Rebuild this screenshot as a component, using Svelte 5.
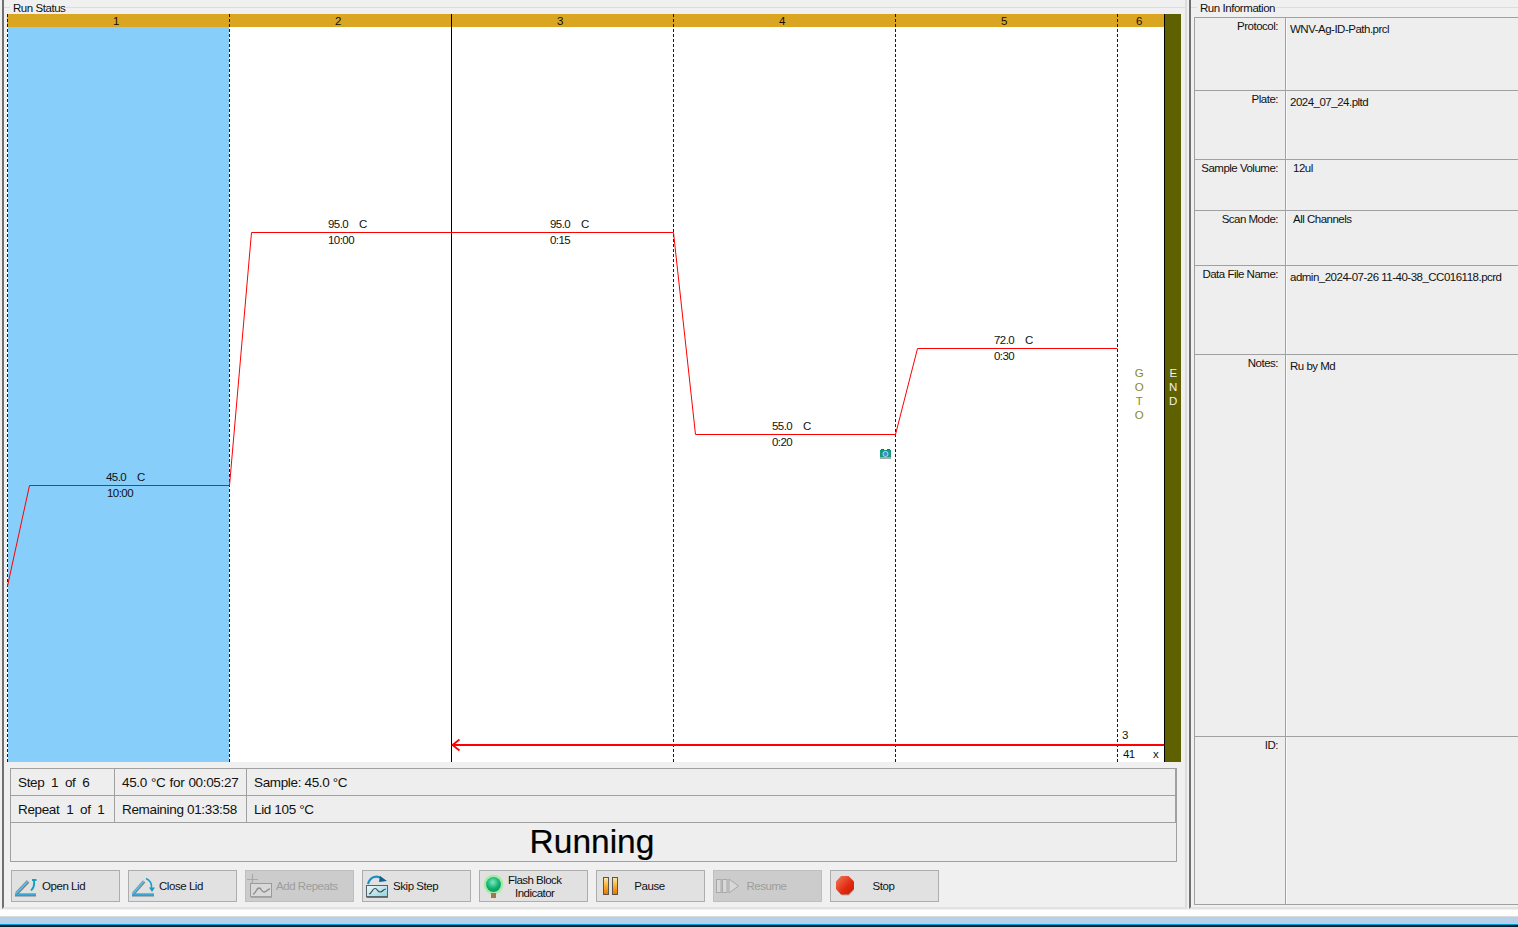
<script>
  const stepLines = [229.5, 673.5, 895.5, 1117.5];
  const stepNumbers = [
    { n: '1', x: 116 }, { n: '2', x: 338 }, { n: '3', x: 560 },
    { n: '4', x: 782 }, { n: '5', x: 1004 }, { n: '6', x: 1139 }
  ];
  const temps = [
    { t: '45.0', c: 137, tx: 106, y: 481, time: '10:00', timex: 107 },
    { t: '95.0', c: 359, tx: 328, y: 228, time: '10:00', timex: 328 },
    { t: '95.0', c: 581, tx: 550, y: 228, time: '0:15', timex: 550 },
    { t: '55.0', c: 803, tx: 772, y: 430, time: '0:20', timex: 772 },
    { t: '72.0', c: 1025, tx: 994, y: 344, time: '0:30', timex: 994 }
  ];
  const info = [
    { label: 'Protocol:', value: 'WNV-Ag-ID-Path.prcl', cls: 'h73' },
    { label: 'Plate:', value: '2024_07_24.pltd', cls: 'h69' },
    { label: 'Sample Volume:', value: '12ul', cls: 'h51 ind' },
    { label: 'Scan Mode:', value: 'All Channels', cls: 'h55 ind' },
    { label: 'Data File Name:', value: 'admin_2024-07-26 11-40-38_CC016118.pcrd', cls: 'h89' },
    { label: 'Notes:', value: 'Ru by Md', cls: 'h382' },
    { label: 'ID:', value: '', cls: 'h169' }
  ];
</script>

<div class="app">
  <div class="panes">
    <section class="left">
      <div class="legend"><span class="rule short"></span><span class="legend-text">Run Status</span><span class="rule"></span></div>
      <div class="chart">
        <svg viewBox="7 14 1174 748" width="1174" height="748">
          <rect x="7" y="14" width="1174" height="748" fill="#fff" />
          <rect x="8" y="27" width="221" height="735" fill="#87cefa" />
          <rect x="7" y="14" width="1157" height="13" fill="#daa520" />
          <rect x="1164" y="14" width="17" height="748" fill="#5f6000" />
          <line x1="1164.5" y1="14" x2="1164.5" y2="762" stroke="#000" />
          <line x1="7.5" y1="14" x2="7.5" y2="762" stroke="#0000e0" stroke-dasharray="3 2" />
          {#each stepLines as x}
            <line x1={x} y1="14" x2={x} y2="762" stroke="#0000e0" stroke-dasharray="3 2" />
          {/each}
          <line x1="451.5" y1="14" x2="451.5" y2="762" stroke="#000" />
          {#each stepNumbers as s}
            <text class="t" x={s.x} y="25" text-anchor="middle">{s.n}</text>
          {/each}
          <polyline class="curve" points="7.5,586 29.5,485.5 229.5,485.5 251.5,232.5 673.5,232.5 695.5,434.5 895.5,434.5 917.5,348.5 1117.5,348.5" />
          {#each temps as d}
            <text class="t" x={d.tx} y={d.y}>{d.t}</text>
            <text class="t" x={d.c} y={d.y}>C</text>
            <text class="t" x={d.timex} y={d.y + 16}>{d.time}</text>
          {/each}
          <line x1="453" y1="745" x2="1164" y2="745" stroke="#f00" stroke-width="2" />
          <polyline points="459.5,739.5 452.5,745 459.5,750.5" fill="none" stroke="#f00" stroke-width="1.8" />
          <text class="t" x="1122" y="739">3</text>
          <text class="t" x="1123" y="758">41</text>
          <text class="t" x="1153" y="758">x</text>
          <text class="t goto" x="1139" y="377" text-anchor="middle">G</text>
          <text class="t goto" x="1139" y="391" text-anchor="middle">O</text>
          <text class="t goto" x="1139" y="405" text-anchor="middle">T</text>
          <text class="t goto" x="1139" y="419" text-anchor="middle">O</text>
          <text class="t end" x="1173" y="377" text-anchor="middle">E</text>
          <text class="t end" x="1173" y="391" text-anchor="middle">N</text>
          <text class="t end" x="1173" y="405" text-anchor="middle">D</text>
          <g>
            <rect x="880" y="450" width="11" height="7" fill="#169a7c" />
            <rect x="880" y="457" width="11" height="2" fill="#9ab0a8" />
            <rect x="881" y="449" width="3" height="1" fill="#555" />
            <rect x="887" y="449" width="3" height="1" fill="#555" />
            <circle cx="885.5" cy="454" r="2.6" fill="#3f8fe0" stroke="#cfe6ff" stroke-width=".8" />
          </g>
        </svg>
      </div>

      <div class="status">
        <div class="cell c1">Step 1 of 6</div>
        <div class="cell c2 wide">45.0 °C for 00:05:27</div>
        <div class="cell c3">Sample: 45.0 °C</div>
        <div class="cell c1">Repeat 1 of 1</div>
        <div class="cell c2">Remaining 01:33:58</div>
        <div class="cell c3">Lid 105 °C</div>
        <div class="running">Running</div>
      </div>

      <div class="buttons">
        <div class="btn">
          <svg class="ico" viewBox="0 0 26 22" width="26" height="22">
            <path d="M2.5 18.5 L14 6.5" stroke="#6f8088" stroke-width="3.4" fill="none" />
            <path d="M2.5 18 L14 6" stroke="#5cc0ea" stroke-width="1.8" fill="none" />
            <path d="M1 20 H22" stroke="#6f8088" stroke-width="3" fill="none" />
            <path d="M1 19.5 H22" stroke="#3aa8d8" stroke-width="1.6" fill="none" />
            <path d="M17 15.5 C20 13 20.5 9 20 5 H18 H22.5" stroke="#14a0c0" stroke-width="1.9" fill="none" />
          </svg>
          <span class="lbl">Open Lid</span>
        </div>
        <div class="btn">
          <svg class="ico" viewBox="0 0 26 22" width="26" height="22">
            <path d="M2.5 18.5 L13 6.5" stroke="#6f8088" stroke-width="3.4" fill="none" />
            <path d="M2.5 18 L13 6" stroke="#5cc0ea" stroke-width="1.8" fill="none" />
            <path d="M1 20 H23" stroke="#6f8088" stroke-width="3" fill="none" />
            <path d="M1 19.5 H23" stroke="#3aa8d8" stroke-width="1.6" fill="none" />
            <path d="M15 3.5 Q21 6 20.5 13" stroke="#14a0c0" stroke-width="1.5" fill="none" />
            <path d="M18 12.5 H24 L21 17 Z" fill="#14a0c0" />
          </svg>
          <span class="lbl">Close Lid</span>
        </div>
        <div class="btn off">
          <svg class="ico" viewBox="0 0 26 26" width="26" height="26">
            <path d="M4.5 1 V12 M-1 6.5 H10" stroke="#a9a9a9" stroke-width="1.2" fill="none" />
            <rect x="2.5" y="10.5" width="21" height="13" fill="#d8d8d8" stroke="#9a9a9a" />
            <path d="M5 21 C8 21 8 15 11 15 C14 15 13 19 16 19 C19 19 19 16 22 16" stroke="#8d8d8d" stroke-width="1.3" fill="none" />
            <path d="M3 24.2 H24" stroke="#a6a6a6" stroke-width="1.6" />
          </svg>
          <span class="lbl">Add Repeats</span>
        </div>
        <div class="btn">
          <svg class="ico" viewBox="0 0 26 26" width="26" height="26">
            <defs>
              <linearGradient id="screen" x1="0" y1="0" x2="1" y2="1">
                <stop offset="0" stop-color="#eef8fa" />
                <stop offset="1" stop-color="#93d3df" />
              </linearGradient>
            </defs>
            <path d="M3 11 C5 3 13 2 17 6" stroke="#1c8ec0" stroke-width="2.2" fill="none" />
            <path d="M15 3 L22 8 L14 9 Z" fill="#14608c" />
            <rect x="1.5" y="12.5" width="21" height="11" fill="url(#screen)" stroke="#54636a" />
            <path d="M4 21 C7 21 7 15.5 10 15.5 C13 15.5 12 19 15 19 C18 19 18 16 21 16" stroke="#3b4a50" stroke-width="1.2" fill="none" />
            <path d="M1.5 24.2 H23" stroke="#5a686e" stroke-width="1.4" />
          </svg>
          <span class="lbl">Skip Step</span>
        </div>
        <div class="btn two">
          <svg class="ico" viewBox="0 0 26 28" width="26" height="28">
            <defs>
              <radialGradient id="bulb" cx=".45" cy=".35" r=".7">
                <stop offset="0" stop-color="#7ee8c0" />
                <stop offset=".6" stop-color="#10b070" />
                <stop offset="1" stop-color="#0c8f68" />
              </radialGradient>
            </defs>
            <circle cx="11.5" cy="12.5" r="9.8" fill="#a6eaa6" />
            <circle cx="11.5" cy="12.5" r="7.4" fill="url(#bulb)" />
            <rect x="9" y="21" width="5" height="5" fill="#a2754c" />
          </svg>
          <span class="lbl center">Flash Block<br />Indicator</span>
        </div>
        <div class="btn">
          <svg class="ico" viewBox="0 0 26 24" width="26" height="24">
            <defs>
              <linearGradient id="bar" x1="0" y1="0" x2="0" y2="1">
                <stop offset="0" stop-color="#ffe9a8" />
                <stop offset=".5" stop-color="#f9b030" />
                <stop offset="1" stop-color="#e87400" />
              </linearGradient>
            </defs>
            <rect x="4.5" y="3.5" width="5" height="17" fill="url(#bar)" stroke="#5d5648" />
            <rect x="13.5" y="3.5" width="5" height="17" fill="url(#bar)" stroke="#5d5648" />
          </svg>
          <span class="lbl center">Pause</span>
        </div>
        <div class="btn off">
          <svg class="ico" viewBox="0 0 26 24" width="26" height="24">
            <rect x=".5" y="5.5" width="4.5" height="13" fill="#d8d8d8" stroke="#a8a8a8" />
            <rect x="6.5" y="5.5" width="4.5" height="13" fill="#d8d8d8" stroke="#a8a8a8" />
            <path d="M13 5 L22.5 12 L13 19 Z" fill="#d8d8d8" stroke="#a8a8a8" />
          </svg>
          <span class="lbl center">Resume</span>
        </div>
        <div class="btn">
          <svg class="ico" viewBox="0 0 26 24" width="26" height="24">
            <defs>
              <linearGradient id="stop" x1="0" y1="0" x2="1" y2="1">
                <stop offset="0" stop-color="#f57a5a" />
                <stop offset=".6" stop-color="#e02a10" />
                <stop offset="1" stop-color="#c81c08" />
              </linearGradient>
            </defs>
            <path d="M9 3.5 H16 L21 8 V16 L16 21.5 H9 L4 16 V8 Z" fill="#b9b0ac" />
            <path d="M8 2 H15.5 L21 7.5 V15 L15.5 20.5 H8 L3 15 V7.5 Z" fill="url(#stop)" />
          </svg>
          <span class="lbl center">Stop</span>
        </div>
      </div>
    </section>

    <section class="right">
      <div class="legend"><span class="rule short"></span><span class="legend-text">Run Information</span><span class="rule"></span></div>
      <div class="info">
        {#each info as row}
          <div class="row {row.cls}">
            <div class="k">{row.label}</div>
            <div class="v">{row.value}</div>
          </div>
        {/each}
      </div>
    </section>
  </div>
  <div class="taskbar"></div>
</div>

<style>
  :global(body) {
    margin: 0;
    overflow: hidden;
    background: #fff;
  }
  .app {
    width: 1518px;
    height: 927px;
    display: flex;
    flex-direction: column;
    font-family: "Liberation Sans", Arial, sans-serif;
    font-size: 11.5px;
    color: #111;
    background: #fff;
  }
  .panes {
    display: flex;
    height: 910px;
    background: #f0f0f0;
  }
  .left {
    width: 1181px;
    margin-left: 2px;
    border-left: 2px solid #6f6f6f;
    border-right: 2px solid #dcdcdc;
    box-sizing: content-box;
    height: 907px;
    border-bottom: 2px solid #e2e2e2;
    margin-right: 2px;
  }
  .right {
    flex: 1;
    border-left: 2px solid #6f6f6f;
    height: 907px;
    border-bottom: 2px solid #e2e2e2;
  }
  .legend {
    display: flex;
    align-items: center;
    height: 14px;
    line-height: 14px;
  }
  .rule {
    flex: 1;
    height: 1px;
    background: #dcdcdc;
  }
  .rule.short {
    flex: 0 0 6px;
  }
  .legend-text {
    padding: 2px 1px 0 3px;
    letter-spacing: -0.45px;
  }
  .chart {
    margin-left: 3px;
    height: 748px;
    width: 1174px;
  }
  .chart svg {
    display: block;
  }
  .t {
    font-family: "Liberation Sans", Arial, sans-serif;
    font-size: 11.5px;
    fill: #111;
    letter-spacing: -0.55px;
  }
  .goto {
    fill: #8a8a20;
  }
  .end {
    fill: #f0f0f0;
  }
  .curve {
    fill: none;
    stroke: #f00;
    stroke-width: 1;
  }
  .status {
    margin: 6px 0 0 6px;
    width: 1167px;
    height: 94px;
    box-sizing: border-box;
    border: 1px solid #a0a0a0;
    background: #eeeeee;
    display: grid;
    grid-template-columns: 104px 132px 1fr;
    grid-template-rows: 27px 27px 1fr;
    font-size: 13.5px;
  }
  .cell {
    display: flex;
    align-items: center;
    border-bottom: 1px solid #a0a0a0;
    border-right: 1px solid #a0a0a0;
    padding-left: 7px;
    white-space: pre;
    letter-spacing: -0.35px;
  }
  .c1 {
    word-spacing: 3.3px;
  }
  .c2 {
    letter-spacing: -0.33px;
  }
  .c2.wide {
    word-spacing: 0.65px;
  }
  .running {
    grid-column: 1 / 4;
    text-align: center;
    font-size: 33.5px;
    line-height: 38px;
    padding-right: 3px;
    color: #000;
    -webkit-text-stroke: 0.2px #000;
  }
  .buttons {
    display: flex;
    gap: 8px;
    margin: 8px 0 0 7px;
  }
  .btn {
    box-sizing: border-box;
    width: 109px;
    height: 32px;
    border: 1px solid #adadad;
    background: #e1e1e1;
    display: flex;
    align-items: center;
    padding-left: 2px;
    letter-spacing: -0.45px;
    white-space: nowrap;
  }
  .btn.off {
    background: #cccccc;
    border-color: #bfbfbf;
    color: #9d9d9d;
  }
  .ico {
    flex: 0 0 26px;
    overflow: visible;
  }
  .lbl {
    padding-left: 2px;
  }
  .lbl.center {
    flex: 1;
    padding: 0 30px 0 0;
    text-align: center;
    line-height: 13px;
  }
  .two .lbl.center {
    padding-top: 2px;
    padding-right: 29px;
    letter-spacing: -0.55px;
  }
  .info {
    margin: 3px 0 0 3px;
    border-top: 1px solid #a0a0a0;
    border-left: 1px solid #a0a0a0;
    border-bottom: 1px solid #a0a0a0;
    height: 888px;
    box-sizing: border-box;
    background: #eeeeee;
    display: flex;
    flex-direction: column;
  }
  .row {
    display: grid;
    grid-template-columns: 91px 1fr;
    border-bottom: 1px solid #a0a0a0;
    box-sizing: border-box;
  }
  .row:last-child {
    border-bottom: 0;
    flex: 1;
  }
  .h73 { height: 73px; }
  .h69 { height: 69px; }
  .h51 { height: 51px; }
  .h55 { height: 55px; }
  .h89 { height: 89px; }
  .h382 { height: 382px; }
  .k {
    border-right: 1px solid #a0a0a0;
    box-shadow: 1px 0 0 #fafafa;
    text-align: right;
    padding: 2px 7px 0 0;
    letter-spacing: -0.5px;
    white-space: nowrap;
  }
  .v {
    padding: 5px 0 0 4px;
    letter-spacing: -0.5px;
    white-space: nowrap;
  }
  .ind .v {
    padding: 2px 0 0 7px;
  }
  .taskbar {
    margin-top: 6px;
    height: 11px;
    box-sizing: border-box;
    background: #b5d0ea;
    border-top: 1px solid #dcdcdc;
    border-bottom: 2px solid #0a1a2a;
    box-shadow: inset 0 -1px 0 #00a0d0;
  }
</style>
